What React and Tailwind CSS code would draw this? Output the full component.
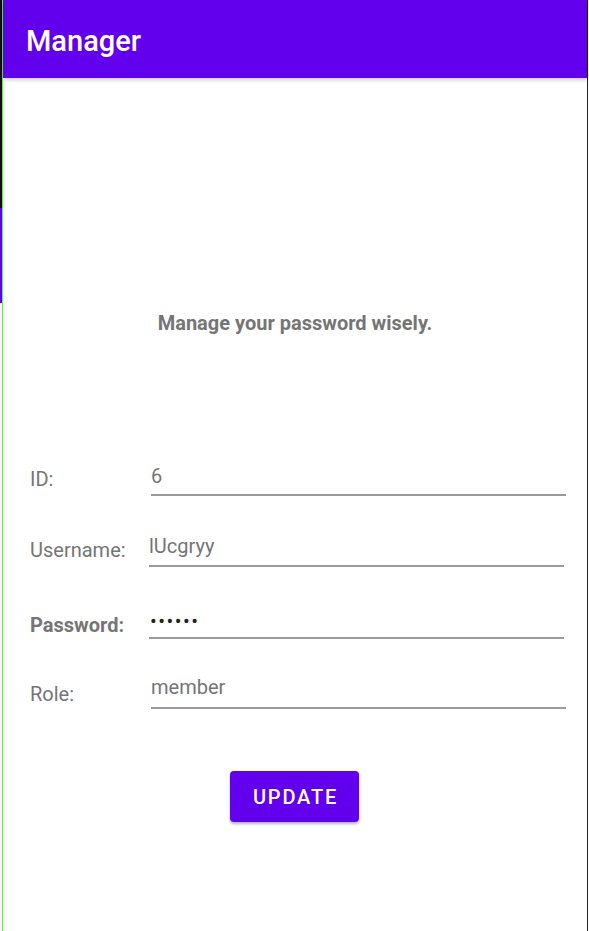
import React from "react";

const font = { fontFamily: "Roboto, 'Noto Sans', sans-serif" };

function Row({ label, value, bold, height, shift, labelMb, valuePb, dark }) {
  return (
    <div className={`flex items-end pl-[27px] ${height}`}>
      <div className={`w-[121px] shrink-0 text-[20px] leading-[24px] text-[#757575] ${bold ? "font-bold" : ""} ${labelMb}`}>
        {label}
      </div>
      <div className={`flex-1 border-b-2 border-[#9a9a9a] ${shift} ${valuePb}`}>
        <div className={`text-[20px] leading-[24px] ${dark ? "pl-px text-[#222] tracking-[1.5px]" : "text-[#757575]"}`}>
          {value}
        </div>
      </div>
    </div>
  );
}

export default function App() {
  return (
    <div className="flex h-[931px] bg-white" style={font}>
      {/* left edge artifacts */}
      <div className="flex w-[2px] flex-col">
        <div className="h-[208px] bg-[#111]" />
        <div className="h-[95px] bg-[#6200ee]" />
        <div className="flex-1 bg-[#f4f4f4]" />
      </div>
      <div className="w-px bg-[#4cff2a]" />

      <main className="flex flex-1 flex-col">
        <header className="relative z-10 flex h-[78px] items-center bg-[#6200ee] px-[23px] pt-[4px] shadow-[0_2px_4px_rgba(0,0,0,0.2)]">
          <h1 className="text-[29px] font-medium leading-[34px] text-white">Manager</h1>
        </header>

        <p className="mt-[233px] text-center text-[20px] font-bold leading-[24px] text-[#757575]">
          Manage your password wisely.
        </p>

        <div className="mt-[90px] pr-[21px]">
          <Row label="ID:" value="6" height="h-[71px]" shift="" labelMb="mb-[5px]" valuePb="pb-[6px]" />
          <Row label="Username:" value="lUcgryy" height="h-[71px]" shift="ml-[-2px] mr-[2px]" labelMb="mb-[5px]" valuePb="pb-[7px]" />
          <Row label="Password:" value="••••••" bold dark height="h-[72px]" shift="ml-[-2px] mr-[2px]" labelMb="mb-[2px]" valuePb="pb-[4px]" />
          <Row label="Role:" value="member" height="h-[70px]" shift="" labelMb="mb-[3px]" valuePb="pb-[8px]" />
        </div>

        <button className="ml-[227px] mt-[62px] flex h-[51px] w-[129px] items-center justify-center rounded-[4px] bg-[#6200ee] pl-[2px] text-[20px] font-medium tracking-[0.09em] text-white shadow-[0_2px_3px_rgba(0,0,0,0.3)]">
          UPDATE
        </button>
      </main>

      <div className="w-px bg-[#222]" />
      <div className="w-px bg-white" />
    </div>
  );
}
